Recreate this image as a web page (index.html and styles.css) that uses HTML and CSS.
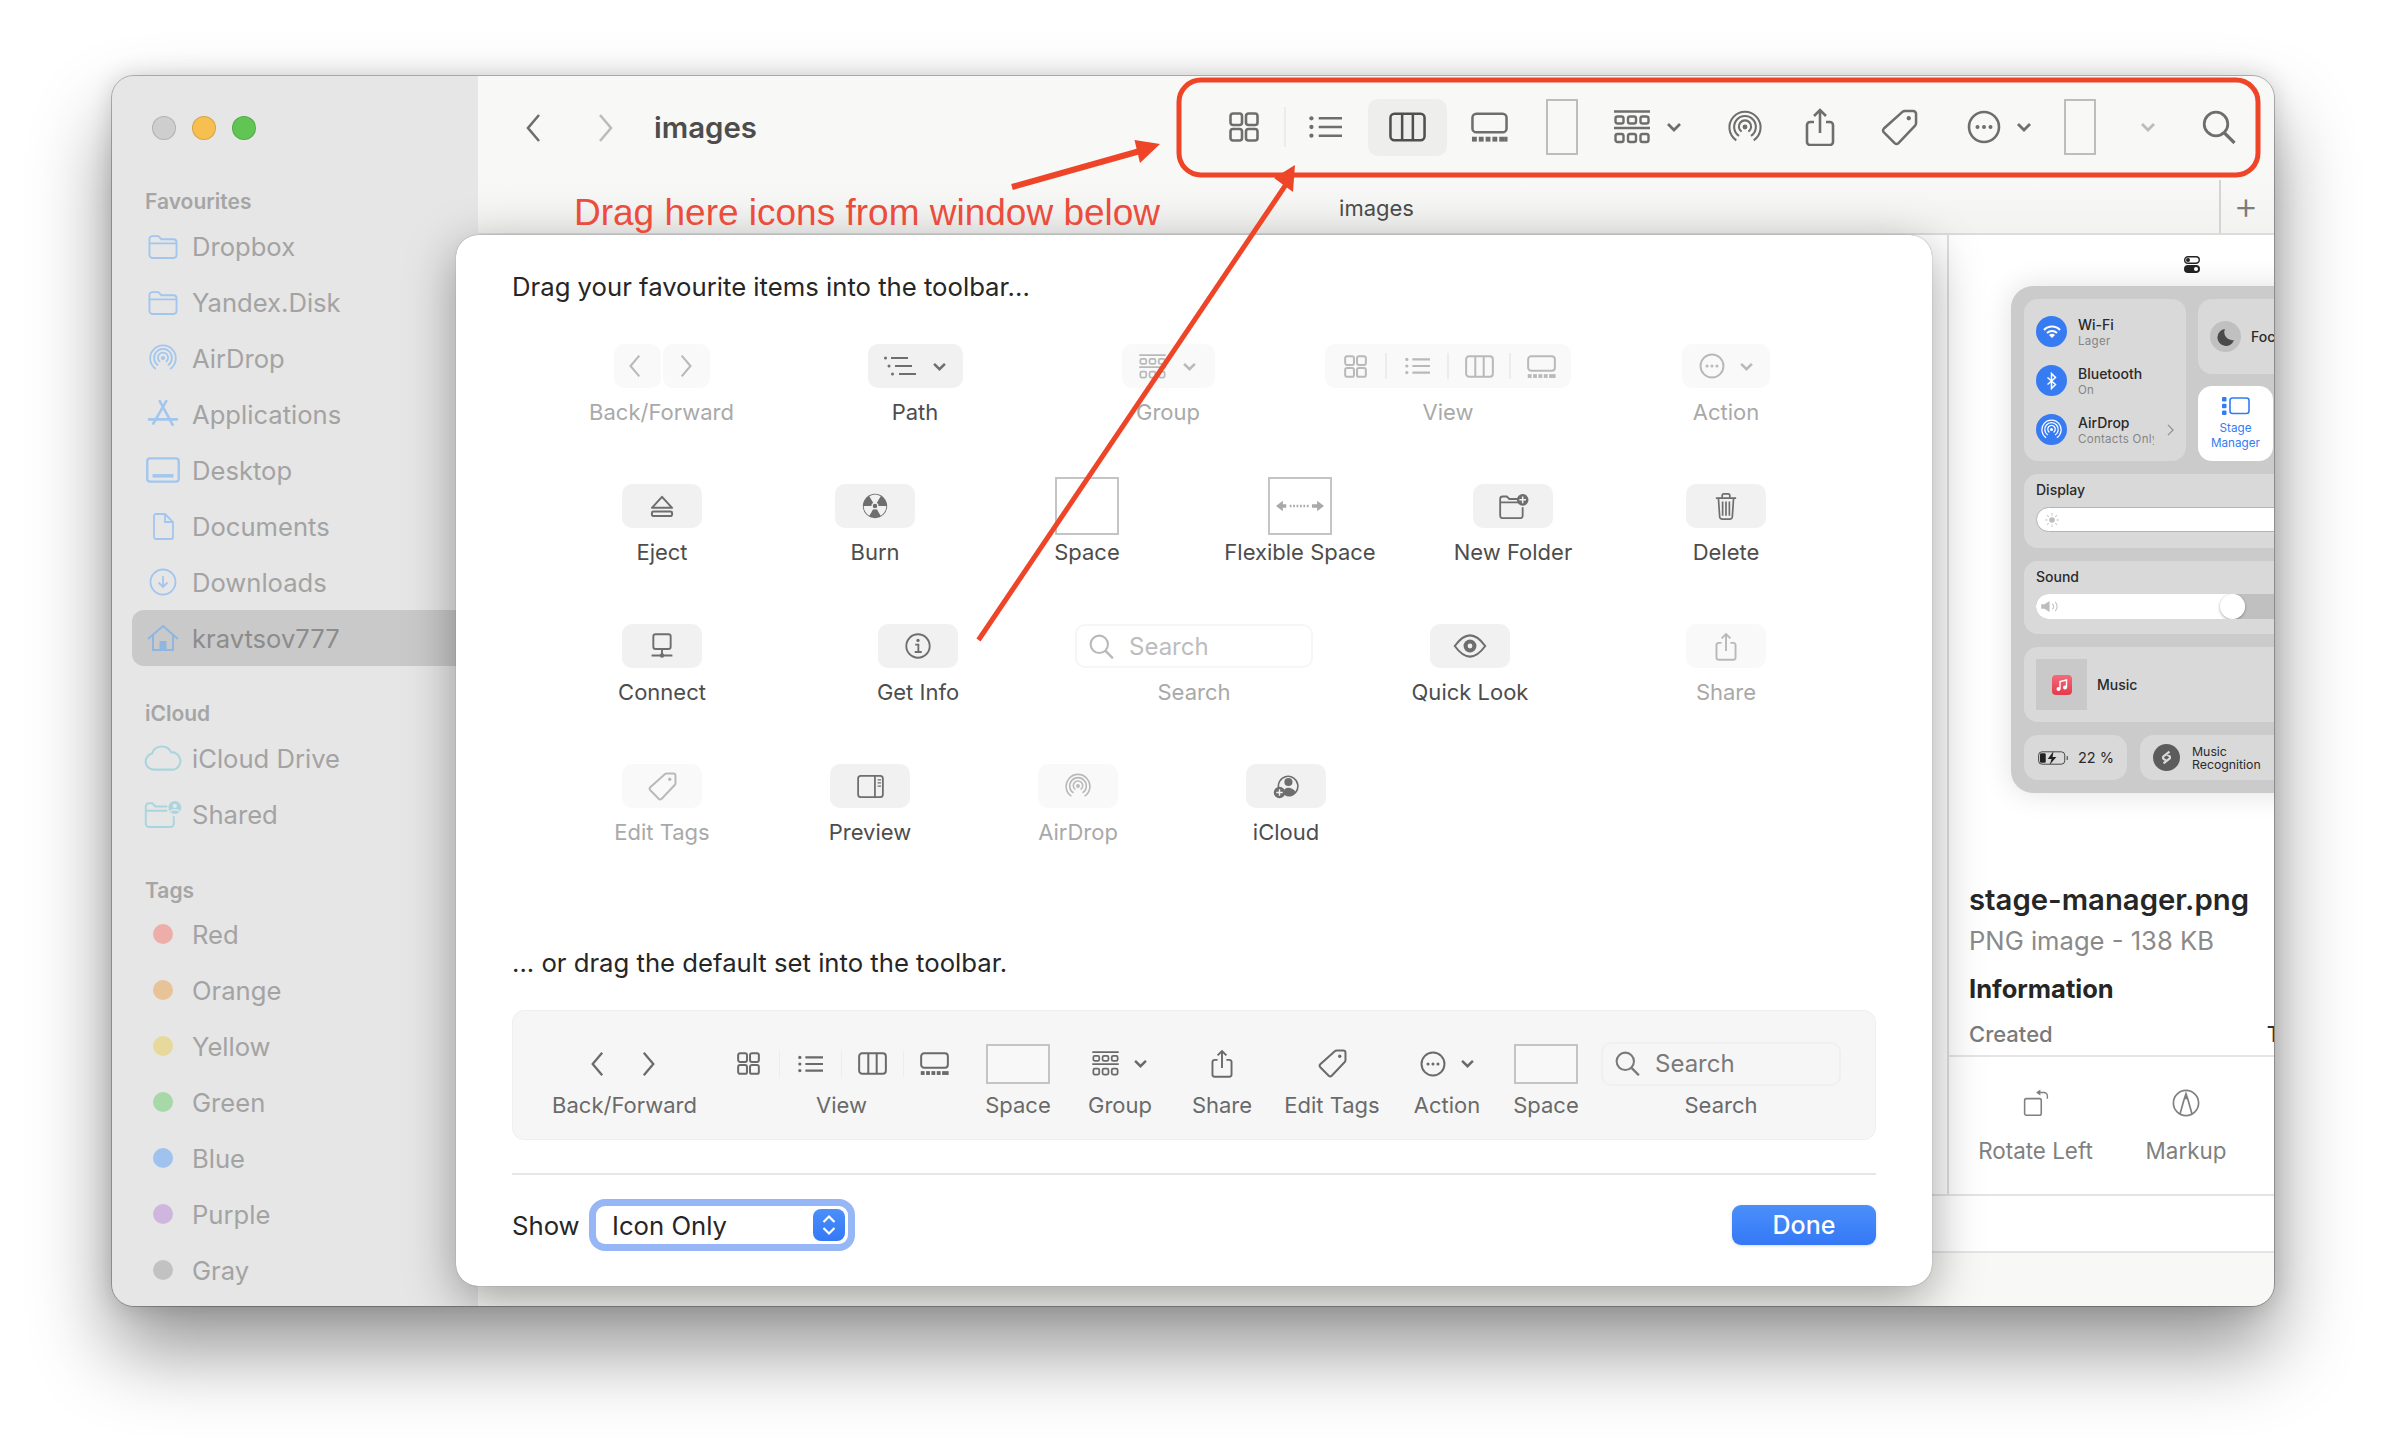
FILE: index.html
```html
<!DOCTYPE html>
<html lang="en">
<head>
    <meta charset="UTF-8">
    <title>images</title>
    <link rel="stylesheet" href="styles.css">
</head>
<body>

    <!-- Icon set, reused with <use> -->
    <svg class="defs" width="0" height="0">
        <symbol id="i-grid" viewBox="0 0 30 30"><g fill="none" stroke="currentColor" stroke-width="2.6"><rect x="1.5" y="1.5" width="11.5" height="11.5" rx="2.5"/><rect x="17" y="1.5" width="11.5" height="11.5" rx="2.5"/><rect x="1.5" y="17" width="11.5" height="11.5" rx="2.5"/><rect x="17" y="17" width="11.5" height="11.5" rx="2.5"/></g></symbol>
        <symbol id="i-list" viewBox="0 0 34 24"><g fill="currentColor"><circle cx="2.5" cy="3" r="2.2"/><circle cx="2.5" cy="12" r="2.2"/><circle cx="2.5" cy="21" r="2.2"/></g><path d="M10 3h24M10 12h24M10 21h24" stroke="currentColor" stroke-width="2.8" fill="none"/></symbol>
        <symbol id="i-path" viewBox="0 0 32 20"><g fill="currentColor"><circle cx="1.5" cy="2" r="1.5"/><circle cx="5" cy="10" r="1.5"/><circle cx="8.500" cy="18" r="1.500"/></g><path d="M7 2h17M11 10h17M15 18h17" stroke="currentColor" stroke-width="2" fill="none"/></symbol>
        <symbol id="i-cols" viewBox="0 0 38 30"><g fill="none" stroke="currentColor" stroke-width="2.6"><rect x="1.5" y="1.5" width="35" height="27" rx="4"/><path d="M13.5 2v26M24.5 2v26"/></g></symbol>
        <symbol id="i-gallery" viewBox="0 0 38 30"><rect x="1.5" y="1.5" width="35" height="19" rx="4" fill="none" stroke="currentColor" stroke-width="2.6"/><g fill="currentColor"><rect x="1" y="25" width="5" height="5"/><rect x="8" y="25" width="5" height="5"/><rect x="15" y="25" width="5" height="5"/><rect x="22" y="25" width="5" height="5"/><rect x="29" y="25" width="5" height="5"/><rect x="34" y="25" width="3.5" height="5"/></g></symbol>
        <symbol id="i-group" viewBox="0 0 36 34"><g fill="none" stroke="currentColor" stroke-width="2.4"><path d="M0 1.5h36M0 18h36"/><rect x="1.5" y="6.5" width="8" height="7" rx="2"/><rect x="14" y="6.5" width="8" height="7" rx="2"/><rect x="26.5" y="6.5" width="8" height="7" rx="2"/><rect x="1.5" y="24" width="8" height="8" rx="2"/><rect x="14" y="24" width="8" height="8" rx="2"/><rect x="26.5" y="24" width="8" height="8" rx="2"/></g></symbol>
        <symbol id="i-chevd" viewBox="0 0 16 10"><path d="M2 2l6 6 6-6" fill="none" stroke="currentColor" stroke-width="2.8"/></symbol>
        <symbol id="i-chevl" viewBox="0 0 16 30"><path d="M14 2L3 15l11 13" fill="none" stroke="currentColor" stroke-width="2.6"/></symbol>
        <symbol id="i-chevr" viewBox="0 0 16 30"><path d="M2 2l11 13L2 28" fill="none" stroke="currentColor" stroke-width="2.6"/></symbol>
        <symbol id="i-airdrop" viewBox="0 0 36 36"><g fill="none" stroke="currentColor" stroke-width="2.2"><path d="M8.8 32.1A16.5 16.5 0 1 1 27.2 32.1"/><path d="M11.7 27.5A11.5 11.5 0 1 1 24.3 27.5"/><path d="M14.4 22.9A6.5 6.5 0 1 1 21.6 22.9"/></g><circle cx="18" cy="18" r="2.6" fill="currentColor"/></symbol>
        <symbol id="i-share" viewBox="0 0 30 38"><path d="M9 14H5a3 3 0 0 0-3 3v17a3 3 0 0 0 3 3h20a3 3 0 0 0 3-3V17a3 3 0 0 0-3-3h-4M15 25V2M9 8l6-6 6 6" fill="none" stroke="currentColor" stroke-width="2.6"/></symbol>
        <symbol id="i-tag" viewBox="0 0 38 38"><path d="M25 2h8a3 3 0 0 1 3 3v9a4 4 0 0 1-1 3L18 35a3 3 0 0 1-4 0L3 24a3 3 0 0 1 0-4L22 3a4 4 0 0 1 3-1z" fill="none" stroke="currentColor" stroke-width="2.6"/><circle cx="28.5" cy="9.5" r="2.2" fill="currentColor"/></symbol>
        <symbol id="i-action" viewBox="0 0 34 34"><circle cx="17" cy="17" r="15" fill="none" stroke="currentColor" stroke-width="2.6"/><g fill="currentColor"><circle cx="10.5" cy="17" r="2"/><circle cx="17" cy="17" r="2"/><circle cx="23.5" cy="17" r="2"/></g></symbol>
        <symbol id="i-search" viewBox="0 0 34 34"><circle cx="14" cy="14" r="11.8" fill="none" stroke="currentColor" stroke-width="2.8"/><path d="M22.5 23l10 10" stroke="currentColor" stroke-width="3.2" fill="none"/></symbol>
        <symbol id="i-eject" viewBox="0 0 26 24"><g fill="none" stroke="currentColor" stroke-width="2.2"><path d="M13 2l11 12H2z" stroke-linejoin="round"/><rect x="2" y="18" width="22" height="5" rx="1.6"/></g></symbol>
        <symbol id="i-burn" viewBox="0 0 32 32"><circle cx="16" cy="16" r="15" fill="currentColor"/><g fill="#f1f1f1"><path d="M16 16L9 4a14 14 0 0 1 14 0z"/><path d="M16 16L9 4a14 14 0 0 1 14 0z" transform="rotate(120 16 16)"/><path d="M16 16L9 4a14 14 0 0 1 14 0z" transform="rotate(240 16 16)"/><circle cx="16" cy="16" r="4.4"/></g><circle cx="16" cy="16" r="2.8" fill="currentColor"/></symbol>
        <symbol id="i-connect" viewBox="0 0 26 30"><g fill="none" stroke="currentColor" stroke-width="2.2"><rect x="3" y="1.5" width="20" height="17" rx="2.6"/><path d="M13 18.5V26M1 26h24"/></g><circle cx="13" cy="26" r="2.6" fill="currentColor"/></symbol>
        <symbol id="i-info" viewBox="0 0 28 28"><circle cx="14" cy="14" r="12.6" fill="none" stroke="currentColor" stroke-width="2"/><circle cx="14" cy="8" r="1.8" fill="currentColor"/><path d="M11 12.5h3.4V20M10.5 20.5h7.5" fill="none" stroke="currentColor" stroke-width="2"/></symbol>
        <symbol id="i-newfolder" viewBox="0 0 36 30"><path d="M24 6H13l-3-3H5a3 3 0 0 0-3 3v20a3 3 0 0 0 3 3h21a3 3 0 0 0 3-3V16M2 10h22" fill="none" stroke="currentColor" stroke-width="2.2"/><circle cx="29" cy="7" r="7" fill="currentColor"/><path d="M29 3v8M25 7h8" stroke="#f1f1f1" stroke-width="1.8"/></symbol>
        <symbol id="i-trash" viewBox="0 0 26 32"><path d="M1 6h24M8.5 5V3a2 2 0 0 1 2-2h5a2 2 0 0 1 2 2v2M4 6l1.5 22a3 3 0 0 0 3 3h9a3 3 0 0 0 3-3L22 6M9 10v17M13 10v17M17 10v17" fill="none" stroke="currentColor" stroke-width="2"/></symbol>
        <symbol id="i-eye" viewBox="0 0 36 26"><path d="M1.5 13C8 4 13 1.5 18 1.5S28 4 34.5 13C28 22 23 24.5 18 24.5S8 22 1.5 13z" fill="none" stroke="currentColor" stroke-width="2.2"/><circle cx="18" cy="13" r="7" fill="currentColor"/><circle cx="18" cy="13" r="2.6" fill="#f1f1f1"/></symbol>
        <symbol id="i-preview" viewBox="0 0 30 26"><g fill="none" stroke="currentColor" stroke-width="2"><rect x="1" y="1" width="28" height="24" rx="3"/><path d="M20 1v24"/><path d="M23 5.5h4M23 9h4M23 12.5h4" stroke-width="1.4"/></g></symbol>
        <symbol id="i-icloud" viewBox="0 0 32 32"><path d="M7 19A12 12 0 1 1 20 28" fill="none" stroke="currentColor" stroke-width="2"/><circle cx="19" cy="11" r="5" fill="currentColor"/><path d="M12 26c0-5 3-8 7-8s8 3 9 6c-2 3-6 5-10 5z" fill="currentColor"/><circle cx="8" cy="24" r="7" fill="currentColor"/><path d="M8 20v8M4 24h8" stroke="#f1f1f1" stroke-width="1.8"/></symbol>
        <symbol id="i-flex" viewBox="0 0 56 14"><path d="M0 7l8-6v4h4v4H8v4zM56 7l-8-6v4h-6v4h6v4z" fill="#a9a9a9"/><path d="M16 7h24" stroke="#a9a9a9" stroke-width="3" stroke-dasharray="2 2"/></symbol>
        <symbol id="i-folder" viewBox="0 0 30 24"><path d="M2 5a3 3 0 0 1 3-3h5.500l3 3H25a3 3 0 0 1 3 3v12a3 3 0 0 1-3 3H5a3 3 0 0 1-3-3zM2 9h26" fill="none" stroke="currentColor" stroke-width="1.800"/></symbol>
        <symbol id="i-apps" viewBox="0 0 30 26"><path d="M12 1l12 22M18 1L6 22M2 18h26" fill="none" stroke="currentColor" stroke-width="2.400" stroke-linecap="round"/></symbol>
        <symbol id="i-desktop" viewBox="0 0 30 24"><rect x="1.500" y="2" width="27" height="20" rx="2.500" fill="none" stroke="currentColor" stroke-width="2"/><path d="M6 17h18" stroke="currentColor" stroke-width="3"/></symbol>
        <symbol id="i-doc" viewBox="0 0 24 28"><path d="M5 2h9l8 8v15a2 2 0 0 1-2 2H5a2 2 0 0 1-2-2V4a2 2 0 0 1 2-2zM14 2v8h8" fill="none" stroke="currentColor" stroke-width="1.800"/></symbol>
        <symbol id="i-down" viewBox="0 0 28 28"><circle cx="14" cy="14" r="12.500" fill="none" stroke="currentColor" stroke-width="1.800"/><path d="M14 8v11M9.500 14.500L14 19l4.500-4.500" fill="none" stroke="currentColor" stroke-width="1.800"/></symbol>
        <symbol id="i-house" viewBox="0 0 32 28"><path d="M1 15L16 2l15 13M6 11v15h20V11" fill="none" stroke="currentColor" stroke-width="2"/><rect x="12.500" y="17" width="7" height="9" fill="currentColor"/></symbol>
        <symbol id="i-cloud" viewBox="0 0 34 24"><path d="M9 22a7 7 0 0 1-1.500-13.800A9 9 0 0 1 24 7a7.600 7.600 0 0 1 2 15z" fill="none" stroke="currentColor" stroke-width="1.800"/></symbol>
        <symbol id="i-sharedfolder" viewBox="0 0 36 26"><path d="M22 6H11L8 3H5a3 3 0 0 0-3 3v16a3 3 0 0 0 3 3h20a3 3 0 0 0 3-3v-7M2 10h20" fill="none" stroke="currentColor" stroke-width="1.800"/><circle cx="29" cy="7" r="6" fill="currentColor"/><circle cx="29" cy="5.500" r="2" fill="#e6e6e6"/><path d="M25 10.500c1-2 7-2 8 0" stroke="#e6e6e6" stroke-width="1.500" fill="none"/></symbol>
        <symbol id="i-rotate" viewBox="0 0 30 32"><rect x="2" y="11" width="19" height="19" rx="2" fill="none" stroke="currentColor" stroke-width="1.800"/><path d="M28 11V8a4 4 0 0 0-4-4h-5" fill="none" stroke="currentColor" stroke-width="1.600"/><path d="M15 4l5-3.500v7z" fill="currentColor"/></symbol>
        <symbol id="i-markup" viewBox="0 0 30 30"><circle cx="15" cy="15" r="13.500" fill="none" stroke="currentColor" stroke-width="1.800"/><path d="M8.500 27L13 11l2-6 2 6 4.500 16" fill="none" stroke="currentColor" stroke-width="1.800"/><path d="M13 11l2-6 2 6z" fill="currentColor"/></symbol>
    </svg>

    <div class="window">

        <!-- Sidebar -->
        <aside class="sidebar">
            <div class="lights">
                <span class="light light-gray"></span>
                <span class="light light-yellow"></span>
                <span class="light light-green"></span>
            </div>

            <h3 class="side-title first">Favourites</h3>
            <div class="side-row"><svg class="side-icon folder"><use href="#i-folder"/></svg>Dropbox</div>
            <div class="side-row"><svg class="side-icon folder"><use href="#i-folder"/></svg>Yandex.Disk</div>
            <div class="side-row"><svg class="side-icon"><use href="#i-airdrop"/></svg>AirDrop</div>
            <div class="side-row"><svg class="side-icon"><use href="#i-apps"/></svg>Applications</div>
            <div class="side-row"><svg class="side-icon"><use href="#i-desktop"/></svg>Desktop</div>
            <div class="side-row"><svg class="side-icon"><use href="#i-doc"/></svg>Documents</div>
            <div class="side-row"><svg class="side-icon"><use href="#i-down"/></svg>Downloads</div>
            <div class="side-row selected"><svg class="side-icon"><use href="#i-house"/></svg>kravtsov777</div>

            <h3 class="side-title">iCloud</h3>
            <div class="side-row teal"><svg class="side-icon"><use href="#i-cloud"/></svg>iCloud Drive</div>
            <div class="side-row teal"><svg class="side-icon"><use href="#i-sharedfolder"/></svg>Shared</div>

            <h3 class="side-title tags-title">Tags</h3>
            <div class="side-row"><span class="dot dot-red"></span>Red</div>
            <div class="side-row"><span class="dot dot-orange"></span>Orange</div>
            <div class="side-row"><span class="dot dot-yellow"></span>Yellow</div>
            <div class="side-row"><span class="dot dot-green"></span>Green</div>
            <div class="side-row"><span class="dot dot-blue"></span>Blue</div>
            <div class="side-row"><span class="dot dot-purple"></span>Purple</div>
            <div class="side-row"><span class="dot dot-gray"></span>Gray</div>
        </aside>

        <!-- Main area -->
        <main class="main">
            <header class="titlebar">
                <div class="nav">
                    <svg class="nav-chev"><use href="#i-chevl"/></svg>
                    <svg class="nav-chev faded"><use href="#i-chevr"/></svg>
                    <span class="folder-name">images</span>
                </div>
                <div class="toolbar">
                    <div class="tb"><svg class="ic-30"><use href="#i-grid"/></svg></div>
                    <div class="tb"><span class="tb-sep"></span></div>
                    <div class="tb"><svg class="ic-list"><use href="#i-list"/></svg></div>
                    <div class="tb"><span class="tb-selected"><svg class="ic-cols"><use href="#i-cols"/></svg></span></div>
                    <div class="tb"><svg class="ic-cols"><use href="#i-gallery"/></svg></div>
                    <div class="tb"><span class="space-tall"></span></div>
                    <div class="tb"><svg class="ic-group"><use href="#i-group"/></svg></div>
                    <div class="tb"><svg class="ic-chev"><use href="#i-chevd"/></svg></div>
                    <div class="tb"><svg class="ic-group"><use href="#i-airdrop"/></svg></div>
                    <div class="tb"><svg class="ic-share"><use href="#i-share"/></svg></div>
                    <div class="tb"><svg class="ic-tag"><use href="#i-tag"/></svg></div>
                    <div class="tb"><svg class="ic-action"><use href="#i-action"/></svg></div>
                    <div class="tb"><svg class="ic-chev"><use href="#i-chevd"/></svg></div>
                    <div class="tb"><span class="space-tall"></span></div>
                    <div class="tb"><svg class="ic-chev faded"><use href="#i-chevd"/></svg></div>
                    <div class="tb"><svg class="ic-action"><use href="#i-search"/></svg></div>
                </div>
            </header>

            <div class="tabbar">
                <div class="tab">images</div>
                <div class="tab-add">+</div>
            </div>

            <div class="content">
                <div class="browser"></div>
                <section class="inspector">
                    <div class="preview">
                        <svg class="cc-glyph" viewBox="0 0 16 17">
                            <rect x="0.700" y="0.700" width="14.600" height="6.600" rx="3.300" fill="#fff" stroke="#222" stroke-width="1.400"/>
                            <circle cx="4" cy="4" r="2" fill="#222"/>
                            <rect y="9" width="16" height="8" rx="4" fill="#222"/>
                            <circle cx="12" cy="13" r="2" fill="#fff"/>
                        </svg>
                        <div class="cc">
                            <div class="cc-top">
                                <div class="cc-card network">
                                    <div class="net-row">
                                        <span class="net-dot">
                                            <svg viewBox="0 0 20 20" width="20" height="20"><path d="M2 8a11 11 0 0 1 16 0M5 11a7 7 0 0 1 10 0" fill="none" stroke="#fff" stroke-width="2"/><path d="M10 16l-3-3a4 4 0 0 1 6 0z" fill="#fff"/></svg>
                                        </span>
                                        <div class="net-text"><div class="net-name">Wi-Fi</div><div class="net-sub">Lager</div></div>
                                    </div>
                                    <div class="net-row">
                                        <span class="net-dot">
                                            <svg viewBox="0 0 20 20" width="20" height="20"><path d="M5.500 6.500l8 7-4 4v-15l4 4-8 7" fill="none" stroke="#fff" stroke-width="1.500"/></svg>
                                        </span>
                                        <div class="net-text"><div class="net-name">Bluetooth</div><div class="net-sub">On</div></div>
                                    </div>
                                    <div class="net-row">
                                        <span class="net-dot">
                                            <svg viewBox="0 0 36 36" width="21" height="21" class="on-blue"><use href="#i-airdrop"/></svg>
                                        </span>
                                        <div class="net-text net-clip"><div class="net-name">AirDrop</div><div class="net-sub">Contacts Only</div></div>
                                        <svg class="net-more" viewBox="0 0 8 14"><path d="M1 1l6 6-6 6" fill="none" stroke="#8f8f8f" stroke-width="1.400"/></svg>
                                    </div>
                                </div>
                                <div class="cc-side">
                                    <div class="cc-card focus">
                                        <span class="moon">
                                            <svg viewBox="0 0 20 20" width="20" height="20"><path d="M9 2a8.500 8.500 0 1 0 9 11A8 8 0 0 1 9 2z" fill="#4a4a4a"/></svg>
                                        </span>
                                        <span class="focus-name">Focus</span>
                                    </div>
                                    <div class="stage">
                                        <svg viewBox="0 0 28 18" width="28" height="18"><g fill="#2f7cf6"><rect width="4.500" height="4.500" y="0" rx="1"/><rect width="4.500" height="4.500" y="6.700" rx="1"/><rect width="4.500" height="4.500" y="13.400" rx="1"/></g><rect x="8" y="1" width="19" height="15.500" rx="2.500" fill="none" stroke="#2f7cf6" stroke-width="1.600"/></svg>
                                        <div class="stage-name">Stage<br>Manager</div>
                                    </div>
                                </div>
                            </div>
                            <div class="cc-card slider-card">
                                <div class="slider-title">Display</div>
                                <div class="slider">
                                    <svg viewBox="0 0 16 16" width="14" height="14"><circle cx="8" cy="8" r="3.200" fill="#bdbdbd"/><path d="M8 0v3M8 13v3M0 8h3M13 8h3M2.300 2.300l2 2M11.700 11.700l2 2M2.300 13.700l2-2M11.700 4.300l2-2" stroke="#c9c9c9" stroke-width="1.200"/></svg>
                                </div>
                            </div>
                            <div class="cc-card slider-card">
                                <div class="slider-title">Sound</div>
                                <div class="slider sound">
                                    <div class="slider-fill">
                                        <svg viewBox="0 0 20 14" width="19" height="13"><path d="M0 4.500h3.500L9 1v12L3.500 9.500H0z" fill="#bdbdbd"/><path d="M12 4a4 4 0 0 1 0 6M15 2a7 7 0 0 1 0 10" fill="none" stroke="#c4c4c4" stroke-width="1.200"/></svg>
                                        <span class="knob"></span>
                                    </div>
                                </div>
                            </div>
                            <div class="cc-card music">
                                <div class="album">
                                    <span class="music-app">
                                        <svg viewBox="0 0 14 14" width="14" height="14"><path d="M5 11V3.500l6.500-1.500v7.500" fill="none" stroke="#fff" stroke-width="1.400"/><circle cx="3.500" cy="11" r="2" fill="#fff"/><circle cx="10" cy="9.500" r="2" fill="#fff"/></svg>
                                    </span>
                                </div>
                                <span class="music-name">Music</span>
                            </div>
                            <div class="cc-bottom">
                                <div class="cc-card battery">
                                    <svg viewBox="0 0 32 14" width="31" height="14"><rect x="0.600" y="0.600" width="27" height="12.800" rx="3.500" fill="none" stroke="#444" stroke-width="1"/><rect x="2" y="2" width="6" height="10" rx="1.500" fill="#222"/><path d="M16 0l-6 8h4l-2 6 7-8h-4z" fill="#222"/><rect x="29.500" y="5" width="1.500" height="4" fill="#666"/></svg>
                                    <span class="battery-text">22 %</span>
                                </div>
                                <div class="cc-card recognition">
                                    <span class="shazam">
                                        <svg viewBox="0 0 16 16" width="19" height="19"><path d="M10.500 3L5.500 7a1.500 1.500 0 0 0 0 2.200l2 1.300M5.500 13l5-4a1.500 1.500 0 0 0 0-2.200l-2-1.300" fill="none" stroke="#d9d9d9" stroke-width="1.800"/></svg>
                                    </span>
                                    <span class="recog-text">Music<br>Recognition</span>
                                </div>
                            </div>
                        </div>
                    </div>

                    <div class="details">
                        <div class="file-name">stage-manager.png</div>
                        <div class="file-kind">PNG image - 138 KB</div>
                        <div class="info-title">Information</div>
                        <div class="info-row"><span>Created</span><span class="info-value">Tuesday</span></div>
                    </div>

                    <div class="actions">
                        <div class="action-item rotate"><svg class="action-icon"><use href="#i-rotate"/></svg>Rotate Left</div>
                        <div class="action-item markup"><svg class="action-icon"><use href="#i-markup"/></svg>Markup</div>
                    </div>
                </section>
            </div>

            <div class="strip"></div>
            <div class="footer"></div>
        </main>

        <!-- Customize toolbar sheet -->
        <section class="sheet">
            <p class="sheet-text">Drag your favourite items into the toolbar...</p>

            <div class="palette row-a">
                <div class="item off">
                    <div class="slot"><div class="btn-pair"><span class="btn half"><svg class="nav-small"><use href="#i-chevl"/></svg></span><span class="btn half"><svg class="nav-small"><use href="#i-chevr"/></svg></span></div></div>
                    <span class="label">Back/Forward</span>
                </div>
                <div class="item">
                    <div class="slot"><span class="btn path"><svg class="ic-path"><use href="#i-path"/></svg><svg class="ic-chev-s"><use href="#i-chevd"/></svg></span></div>
                    <span class="label">Path</span>
                </div>
                <div class="item off">
                    <div class="slot"><span class="btn path group-btn"><svg class="ic-group-s"><use href="#i-group"/></svg><svg class="ic-chev-s"><use href="#i-chevd"/></svg></span></div>
                    <span class="label">Group</span>
                </div>
                <div class="item off">
                    <div class="slot"><span class="btn view-btn">
                        <span class="cell"><svg class="ic-23"><use href="#i-grid"/></svg></span><span class="cell"><span class="cell-sep"></span></span><span class="cell"><svg class="ic-list-s"><use href="#i-list"/></svg></span><span class="cell"><span class="cell-sep"></span></span><span class="cell"><svg class="ic-cols-s"><use href="#i-cols"/></svg></span><span class="cell"><span class="cell-sep"></span></span><span class="cell"><svg class="ic-cols-s"><use href="#i-gallery"/></svg></span>
                    </span></div>
                    <span class="label">View</span>
                </div>
                <div class="item off">
                    <div class="slot"><span class="btn action-btn"><svg class="ic-26"><use href="#i-action"/></svg><svg class="ic-chev-s"><use href="#i-chevd"/></svg></span></div>
                    <span class="label">Action</span>
                </div>
            </div>

            <div class="palette row-b">
                <div class="item"><div class="slot"><span class="btn"><svg class="ic-eject"><use href="#i-eject"/></svg></span></div><span class="label">Eject</span></div>
                <div class="item"><div class="slot"><span class="btn"><svg class="ic-26"><use href="#i-burn"/></svg></span></div><span class="label">Burn</span></div>
                <div class="item"><div class="slot"><span class="space-box"></span></div><span class="label">Space</span></div>
                <div class="item"><div class="slot"><span class="space-box"><svg class="ic-flex"><use href="#i-flex"/></svg></span></div><span class="label">Flexible Space</span></div>
                <div class="item"><div class="slot"><span class="btn"><svg class="ic-folder"><use href="#i-newfolder"/></svg></span></div><span class="label">New Folder</span></div>
                <div class="item"><div class="slot"><span class="btn"><svg class="ic-trash"><use href="#i-trash"/></svg></span></div><span class="label">Delete</span></div>
            </div>

            <div class="palette row-c">
                <div class="item"><div class="slot"><span class="btn"><svg class="ic-26"><use href="#i-connect"/></svg></span></div><span class="label">Connect</span></div>
                <div class="item"><div class="slot"><span class="btn"><svg class="ic-26"><use href="#i-info"/></svg></span></div><span class="label">Get Info</span></div>
                <div class="item off"><div class="slot"><span class="search-box wide"><svg class="ic-search-s"><use href="#i-search"/></svg><span class="search-text">Search</span></span></div><span class="label">Search</span></div>
                <div class="item"><div class="slot"><span class="btn"><svg class="ic-eye"><use href="#i-eye"/></svg></span></div><span class="label">Quick Look</span></div>
                <div class="item off"><div class="slot"><span class="btn"><svg class="ic-share-s"><use href="#i-share"/></svg></span></div><span class="label">Share</span></div>
            </div>

            <div class="palette row-d">
                <div class="item off"><div class="slot"><span class="btn"><svg class="ic-tag-s"><use href="#i-tag"/></svg></span></div><span class="label">Edit Tags</span></div>
                <div class="item"><div class="slot"><span class="btn"><svg class="ic-preview"><use href="#i-preview"/></svg></span></div><span class="label">Preview</span></div>
                <div class="item off"><div class="slot"><span class="btn"><svg class="ic-26"><use href="#i-airdrop"/></svg></span></div><span class="label">AirDrop</span></div>
                <div class="item"><div class="slot"><span class="btn"><svg class="ic-26"><use href="#i-icloud"/></svg></span></div><span class="label">iCloud</span></div>
            </div>

            <p class="sheet-text or-text">... or drag the default set into the toolbar.</p>

            <div class="defaults">
                <div class="d-item"><div class="d-slot"><svg class="d-chev"><use href="#i-chevl"/></svg><svg class="d-chev gap-36"><use href="#i-chevr"/></svg></div><span class="label">Back/Forward</span></div>
                <div class="d-item"><div class="d-slot">
                    <span class="cell"><svg class="ic-23"><use href="#i-grid"/></svg></span><span class="cell"><span class="cell-sep"></span></span><span class="cell"><svg class="ic-list-s"><use href="#i-list"/></svg></span><span class="cell"><span class="cell-sep"></span></span><span class="cell"><svg class="ic-cols-s"><use href="#i-cols"/></svg></span><span class="cell"><span class="cell-sep"></span></span><span class="cell"><svg class="ic-cols-s"><use href="#i-gallery"/></svg></span>
                </div><span class="label">View</span></div>
                <div class="d-item"><div class="d-slot"><span class="d-space"></span></div><span class="label">Space</span></div>
                <div class="d-item"><div class="d-slot d-wide"><svg class="ic-group-s"><use href="#i-group"/></svg><svg class="ic-chev-s"><use href="#i-chevd"/></svg></div><span class="label">Group</span></div>
                <div class="d-item"><div class="d-slot"><svg class="ic-share-s"><use href="#i-share"/></svg></div><span class="label">Share</span></div>
                <div class="d-item"><div class="d-slot"><svg class="ic-tag-s"><use href="#i-tag"/></svg></div><span class="label">Edit Tags</span></div>
                <div class="d-item"><div class="d-slot d-wide"><svg class="ic-26"><use href="#i-action"/></svg><svg class="ic-chev-s"><use href="#i-chevd"/></svg></div><span class="label">Action</span></div>
                <div class="d-item"><div class="d-slot"><span class="d-space"></span></div><span class="label">Space</span></div>
                <div class="d-item"><div class="d-slot"><span class="search-box dark"><svg class="ic-search-s"><use href="#i-search"/></svg><span class="search-text">Search</span></span></div><span class="label">Search</span></div>
            </div>

            <div class="sheet-line"></div>

            <div class="sheet-footer">
                <span class="show-label">Show</span>
                <div class="select">
                    <span>Icon Only</span>
                    <span class="stepper">
                        <svg viewBox="0 0 16 24" width="16" height="24"><path d="M2.500 9L8 3.500 13.500 9M2.500 15L8 20.500 13.500 15" fill="none" stroke="#fff" stroke-width="2.200"/></svg>
                    </span>
                </div>
                <button class="done">Done</button>
            </div>
        </section>
    </div>

    <!-- Red annotations over the screenshot -->
    <svg class="marks" width="2386" height="1454" viewBox="0 0 2386 1454">
        <rect x="1179" y="80" width="1079" height="95" rx="22" fill="none" stroke="#ee4528" stroke-width="5"/>
        <path d="M1012 187L1140 151" stroke="#ee4528" stroke-width="6" fill="none"/>
        <path d="M1160 144L1134.500 140 1140 163z" fill="#ee4528"/>
        <path d="M978.500 640L1287 183" stroke="#ee4528" stroke-width="5" fill="none"/>
        <path d="M1295 165L1274 178 1293 192z" fill="#ee4528"/>
    </svg>
    <div class="note">Drag here icons from window below</div>

</body>
</html>
```

FILE: styles.css
```css
* {
    box-sizing: border-box;
}

html, body {
    margin: 0;
    padding: 0;
    width: 2386px;
    height: 1454px;
    overflow: hidden;
    background-color: #fff;
    font-family: Inter, "Noto Sans", sans-serif;
    position: relative;
}

.defs {
    position: absolute;
}

svg {
    display: block;
}

/* window */
.window {
    position: absolute;
    left: 112px;
    top: 76px;
    width: 2162px;
    height: 1230px;
    display: flex;
    border-radius: 22px;
    overflow: hidden;
    outline: 1px solid rgba(0, 0, 0, 0.25);
}

body::before {
    content: "";
    position: absolute;
    left: 112px;
    top: 76px;
    width: 2162px;
    height: 1230px;
    border-radius: 22px;
    box-shadow: 0 44px 80px rgba(0, 0, 0, 0.42), 0 0 24px rgba(0, 0, 0, 0.16);
}

/* sidebar */
.sidebar {
    width: 366px;
    flex: none;
    background-color: #e6e6e6;
    padding-top: 40px;
    color: #a3a3a3;
    font-size: 25.600px;
}

.lights {
    display: flex;
    gap: 16px;
    padding-left: 40px;
}

.light {
    width: 24px;
    height: 24px;
    border-radius: 50%;
    border: 1px solid rgba(0, 0, 0, 0.14);
}

.light-gray { background-color: #cecece; }
.light-yellow { background-color: #f6bf4f; }
.light-green { background-color: #61c554; }

.side-title {
    margin: 34px 0 2px 33px;
    height: 28px;
    line-height: 28px;
    font-size: 21px;
    font-weight: 600;
    color: #a5a5a5;
}

.side-title.first {
    margin-top: 48px;
    margin-bottom: 2px;
}

.side-title.tags-title {
    margin-top: 35px;
    margin-bottom: 1px;
}

.side-row {
    height: 56px;
    margin: 0 0 0 20px;
    padding-left: 9px;
    display: flex;
    align-items: center;
    gap: 7px;
    color: #a3a3a3;
    white-space: nowrap;
}

.side-row.selected {
    background-color: #c9c9c9;
    color: #8c8c8c;
    border-radius: 12px;
}

.side-icon {
    width: 44px;
    height: 28px;
    color: #a2c6ee;
}

.side-icon.folder {
    height: 25px;
}

.teal .side-icon {
    color: #a9d5de;
}

.selected .side-icon {
    color: #8fb6e0;
}

.dot {
    width: 20px;
    height: 20px;
    border-radius: 50%;
    margin: 0 12px;
}

.dot-red { background-color: #edaeaa; }
.dot-orange { background-color: #e9c398; }
.dot-yellow { background-color: #e7d89b; }
.dot-green { background-color: #a7d8a8; }
.dot-blue { background-color: #9fc3ee; }
.dot-purple { background-color: #cfb6df; }
.dot-gray { background-color: #c2c2c2; }

/* main */
.main {
    flex: 1;
    min-width: 0;
    display: flex;
    flex-direction: column;
    background-color: #fff;
    color: #6e6e6e;
}

.titlebar {
    height: 104px;
    flex: none;
    display: flex;
    align-items: center;
    justify-content: space-between;
    background-color: #f8f8f6;
    padding: 0 2px 0 47px;
}

.nav {
    display: flex;
    align-items: center;
}

.nav-chev {
    width: 16px;
    height: 30px;
    margin-right: 57px;
}

.nav-chev.faded {
    margin-right: 40px;
}

.faded {
    color: #bcbcbc;
}

.folder-name {
    font-size: 29.400px;
    font-weight: 600;
    color: #4d4d4d;
    margin-top: -1px;
}

.toolbar {
    display: grid;
    grid-template-columns: 44px 38px 42px 122px 42px 104px 36px 48px 94px 56px 102px 68px 12px 100px 36px 106px;
    height: 60px;
    align-items: center;
    justify-items: center;
    margin-top: -2px;
}

.tb {
    display: flex;
    align-items: center;
    justify-content: center;
    width: 100%;
    overflow: visible;
}

.tb-sep {
    width: 2px;
    height: 40px;
    background-color: #ececec;
}

.tb-selected {
    width: 79px;
    height: 57px;
    background-color: #eeeeec;
    border-radius: 10px;
    display: flex;
    align-items: center;
    justify-content: center;
    color: #4f4f4f;
}

.space-tall {
    width: 32px;
    height: 56px;
    border: 2px solid #bdbdbd;
    background-color: #f8f8f6;
    flex: none;
}

.ic-30 { width: 30px; height: 30px; }
.ic-list { width: 33px; height: 24px; }
.ic-cols { width: 37px; height: 30px; }
.ic-group { width: 36px; height: 34px; }
.ic-chev { width: 16px; height: 10px; flex: none; }
.ic-share { width: 30px; height: 38px; }
.ic-tag { width: 37px; height: 37px; }
.ic-action { width: 34px; height: 34px; flex: none; }

.tabbar {
    height: 55px;
    flex: none;
    display: flex;
    background: linear-gradient(#f8f8f6, #f2f2f1);
    border-bottom: 2px solid #dcdcdc;
}

.tab {
    flex: 1;
    text-align: center;
    font-size: 22px;
    line-height: 56px;
    color: #4d4d4d;
    padding-left: 56px;
}

.tab-add {
    width: 55px;
    border-left: 2px solid #d4d4d4;
    text-align: center;
    font-size: 38px;
    font-weight: 300;
    line-height: 50px;
    color: #7c7c7c;
    padding-right: 3px;
}

.content {
    flex: none;
    height: 959px;
    display: flex;
}

.browser {
    flex: 1;
    background-color: #fff;
}

/* inspector */
.inspector {
    width: 327px;
    flex: none;
    border-left: 2px solid #dfdfdf;
    overflow: hidden;
    display: flex;
    flex-direction: column;
    background-color: #fff;
}

.preview {
    flex: none;
    height: 648px;
}

.cc-glyph {
    width: 16px;
    height: 17px;
    margin: 21px 0 0 235px;
}

.cc {
    margin: 13px 0 0 62px;
    width: 340px;
    height: 507px;
    padding: 13px;
    border-radius: 22px;
    background-color: #cbcbcb;
    display: flex;
    flex-direction: column;
    gap: 13px;
    box-shadow: 0 0 30px rgba(0, 0, 0, 0.12);
    color: #2a2a2a;
}

.cc-top {
    display: flex;
    gap: 12px;
}

.cc-card {
    background-color: #d9d9d9;
    border-radius: 14px;
}

.network {
    width: 162px;
    height: 162px;
    flex: none;
    padding: 17px 12px 0;
    display: flex;
    flex-direction: column;
    gap: 18px;
}

.net-row {
    height: 31px;
    display: flex;
    align-items: center;
    gap: 11px;
    position: relative;
}

.net-dot {
    width: 31px;
    height: 31px;
    flex: none;
    border-radius: 50%;
    background-color: #377bf3;
    display: flex;
    align-items: center;
    justify-content: center;
}

.on-blue {
    color: #fff;
}

.net-text {
    padding-top: 2px;
}

.net-name {
    font-size: 14px;
    font-weight: 500;
    line-height: 17px;
}

.net-sub {
    font-size: 11.500px;
    letter-spacing: 0.3px;
    line-height: 17px;
    color: #858585;
    white-space: nowrap;
}

.net-clip {
    width: 76px;
    overflow: hidden;
}

.net-more {
    width: 7px;
    height: 12px;
    margin-left: 2px;
}

.cc-side {
    display: flex;
    flex-direction: column;
    gap: 12px;
}

.focus {
    width: 140px;
    height: 75px;
    display: flex;
    align-items: center;
    padding-left: 12px;
    gap: 10px;
}

.moon {
    width: 31px;
    height: 31px;
    border-radius: 50%;
    background-color: #c0c0c0;
    display: flex;
    align-items: center;
    justify-content: center;
}

.focus-name {
    font-size: 14px;
    font-weight: 500;
}

.stage {
    width: 75px;
    height: 75px;
    background-color: #fff;
    border-radius: 14px;
    display: flex;
    flex-direction: column;
    align-items: center;
    padding-top: 11px;
}

.stage-name {
    margin-top: 6px;
    text-align: center;
    font-size: 11.700px;
    line-height: 15px;
    color: #2f7cf6;
}

.slider-card {
    height: 75px;
    width: 300px;
    padding: 7px 12px;
}

.slider-title {
    font-size: 14px;
    line-height: 18px;
    font-weight: 500;
    margin-bottom: 8px;
}

.slider {
    height: 25px;
    border-radius: 13px;
    background-color: #fff;
    border: 1px solid #b4b4b4;
    padding-left: 8px;
    display: flex;
    align-items: center;
}

.slider.sound {
    background-color: #c0c0c0;
    border: none;
    padding: 0;
    overflow: hidden;
}

.slider-fill {
    width: 209px;
    height: 25px;
    background-color: #fff;
    border-radius: 13px;
    padding-left: 5px;
    display: flex;
    align-items: center;
    justify-content: space-between;
}

.knob {
    width: 25px;
    height: 25px;
    border-radius: 50%;
    background-color: #fff;
    box-shadow: 0 1px 3px rgba(0, 0, 0, 0.35);
}

.music {
    width: 300px;
    height: 75px;
    padding: 12px;
    display: flex;
    align-items: center;
    gap: 10px;
}

.album {
    width: 51px;
    height: 51px;
    background-color: #c9c9c9;
    display: flex;
    align-items: center;
    justify-content: center;
}

.music-app {
    width: 20px;
    height: 20px;
    border-radius: 4px;
    background: linear-gradient(#f56a7a, #e23b4d);
    display: flex;
    align-items: center;
    justify-content: center;
}

.music-name {
    font-size: 14px;
    font-weight: 500;
}

.cc-bottom {
    display: flex;
    gap: 13px;
}

.battery {
    width: 103px;
    height: 45px;
    flex: none;
    display: flex;
    align-items: center;
    gap: 9px;
    padding-left: 14px;
}

.battery-text {
    font-size: 14.500px;
}

.recognition {
    width: 160px;
    height: 45px;
    display: flex;
    align-items: center;
    gap: 12px;
    padding-left: 13px;
}

.shazam {
    width: 27px;
    height: 27px;
    flex: none;
    border-radius: 50%;
    background-color: #5c5c5c;
    display: flex;
    align-items: center;
    justify-content: center;
}

.recog-text {
    font-size: 12.300px;
    line-height: 13px;
}

.details {
    flex: 1;
    padding: 0 0 0 20px;
    white-space: nowrap;
}

.file-name {
    height: 34px;
    line-height: 34px;
    font-size: 29.300px;
    font-weight: 600;
    color: #262626;
}

.file-kind {
    margin-top: 8px;
    height: 32px;
    line-height: 32px;
    font-size: 25.600px;
    color: #8a8a8a;
}

.info-title {
    margin-top: 17px;
    height: 30px;
    line-height: 30px;
    font-size: 25.500px;
    font-weight: 700;
    color: #262626;
}

.info-row {
    margin-top: 16px;
    height: 28px;
    line-height: 28px;
    font-size: 22px;
    font-weight: 500;
    color: #7a7a7a;
    display: flex;
}

.info-value {
    margin-left: 214px;
    color: #333;
}

.actions {
    flex: none;
    height: 139px;
    border-top: 2px solid #e4e4e4;
    display: flex;
    padding-top: 32px;
}

.action-item {
    display: flex;
    flex-direction: column;
    align-items: center;
    gap: 20px;
    font-size: 22.400px;
    line-height: 28px;
    color: #808080;
    white-space: nowrap;
}

.action-item.rotate { width: 173px; }
.action-item.markup { width: 128px; }

.action-icon {
    width: 28px;
    height: 28px;
}

.strip {
    flex: none;
    height: 57px;
    background-color: #fff;
    border-top: 2px solid #e4e4e4;
}

.footer {
    flex: 1;
    background-color: #f8f8f6;
    border-top: 2px solid #e4e4e4;
}

/* sheet */
.sheet {
    position: absolute;
    left: 344px;
    top: 159px;
    width: 1476px;
    height: 1051px;
    padding: 35px 56px 0 56px;
    background-color: #fff;
    border-radius: 22px;
    box-shadow: 0 14px 50px rgba(0, 0, 0, 0.36), 0 0 1px rgba(0, 0, 0, 0.5);
    color: #4d4d4d;
}

.sheet-text {
    margin: 0;
    height: 34px;
    line-height: 34px;
    font-size: 25.700px;
    color: #262626;
}

.or-text {
    margin-top: 49px;
}

.palette {
    display: grid;
    height: 140px;
    align-items: start;
    margin-left: 1px;
}

.row-a {
    margin-top: 33px;
    grid-template-columns: 297px 210px 296px 264px 292px;
}

.row-b { grid-template-columns: 298px 128px 296px 130px 296px 130px; }
.row-c { grid-template-columns: 298px 214px 338px 214px 298px; }
.row-d { grid-template-columns: 298px 118px 298px 118px; }

.item, .d-item {
    display: flex;
    flex-direction: column;
    align-items: center;
}

.off {
    color: #a9a9a9;
}

.off .btn {
    background-color: #f9f9f9;
}

.slot {
    height: 58px;
    display: flex;
    align-items: center;
    justify-content: center;
    margin-bottom: 2px;
}

.label {
    height: 30px;
    line-height: 30px;
    font-size: 22px;
    white-space: nowrap;
}

.btn {
    width: 80px;
    height: 44px;
    background-color: #f1f1f1;
    border-radius: 10px;
    color: #6e6e6e;
    display: flex;
    align-items: center;
    justify-content: center;
    flex: none;
}

.off .btn,
.off .search-box {
    color: #b9b9b9;
}

.btn-pair {
    display: flex;
    gap: 2px;
}

.btn.half {
    width: 47px;
}

.btn.half:first-child {
    padding-right: 5px;
}

.nav-small {
    width: 13px;
    height: 24px;
}

.btn.path {
    width: 95px;
    gap: 16px;
}

.btn.group-btn {
    width: 93px;
    gap: 16px;
}

.btn.view-btn {
    width: 246px;
}

.btn.action-btn {
    width: 88px;
    gap: 14px;
}

.cell {
    width: 31px;
    height: 30px;
    display: flex;
    align-items: center;
    justify-content: center;
    flex: none;
}

.cell-sep {
    width: 1.500px;
    height: 26px;
    background-color: #ececec;
}

.ic-23 { width: 23px; height: 23px; }
.ic-26 { width: 26px; height: 26px; flex: none; }
.ic-list-s { width: 25px; height: 18px; flex: none; }
.ic-path { width: 32px; height: 20px; flex: none; }
.ic-cols-s { width: 29px; height: 23px; flex: none; }
.ic-group-s { width: 27px; height: 25px; flex: none; }
.ic-chev-s { width: 15px; height: 9px; flex: none; }
.ic-eject { width: 24px; height: 22px; }
.ic-folder { width: 33px; height: 25px; }
.ic-trash { width: 22px; height: 27px; }
.ic-eye { width: 34px; height: 24px; }
.ic-preview { width: 29px; height: 23px; }
.ic-share-s { width: 22px; height: 29px; }
.ic-tag-s { width: 29px; height: 29px; }
.ic-search-s { width: 25px; height: 25px; flex: none; }

.ic-flex {
    width: 54px;
    height: 12px;
}

.space-box {
    width: 64px;
    height: 58px;
    border: 2px solid #c4c4c4;
    background-color: #fff;
    display: flex;
    align-items: center;
    justify-content: center;
    flex: none;
}

.search-box {
    width: 240px;
    height: 44px;
    border: 2px solid #f0f0f0;
    border-radius: 10px;
    display: flex;
    align-items: center;
    gap: 15px;
    padding-left: 12px;
    color: #7a7a7a;
    flex: none;
}

.search-box.wide {
    width: 238px;
    border-color: #f6f6f6;
}

.search-text {
    font-size: 24px;
}

.off .search-text {
    color: #bdbdbd;
}

.defaults {
    margin-top: 30px;
    height: 130px;
    padding-top: 31px;
    background-color: #f6f6f6;
    border: 1px solid #efefef;
    border-radius: 12px;
    display: grid;
    grid-template-columns: 223px 211px 142px 62px 142px 78px 152px 46px 304px;
    width: 1364px;
    align-items: start;
    color: #6a6a6a;
}

.d-slot {
    height: 43px;
    display: flex;
    align-items: center;
    justify-content: center;
    margin-bottom: 5px;
    flex: none;
}

.d-wide {
    gap: 14px;
}

.d-chev {
    width: 14px;
    height: 26px;
}

.gap-36 {
    margin-left: 38px;
    margin-right: 3px;
}

.d-space {
    width: 64px;
    height: 40px;
    border: 2px solid #c4c4c4;
    background-color: #f8f8f8;
    flex: none;
}

.sheet-line {
    margin-top: 33px;
    width: 1364px;
    height: 2px;
    background-color: #e6e6e6;
}

.sheet-footer {
    margin-top: 24px;
    height: 52px;
    display: flex;
    align-items: center;
    color: #262626;
}

.show-label {
    font-size: 25.700px;
    width: 84px;
}

.select {
    width: 252px;
    height: 38px;
    background-color: #fff;
    border-radius: 9px;
    box-shadow: 0 0 0 7px #97b6f5, 0 1px 3px rgba(0, 0, 0, 0.3);
    display: flex;
    align-items: center;
    justify-content: space-between;
    padding: 0 3px 0 16px;
    font-size: 25.700px;
}

.stepper {
    width: 32px;
    height: 32px;
    background: linear-gradient(#4b8ffb, #3478f6);
    border-radius: 8px;
    display: flex;
    align-items: center;
    justify-content: center;
}

.done {
    margin-left: auto;
    width: 144px;
    height: 40px;
    border: none;
    border-radius: 9px;
    background: linear-gradient(#4b8ffb, #3478f6);
    box-shadow: 0 1px 3px rgba(0, 0, 0, 0.15);
    color: #fff;
    font-family: inherit;
    font-size: 25px;
    font-weight: 500;
}

/* annotations */
.marks {
    position: absolute;
    left: 0;
    top: 0;
    pointer-events: none;
}

.note {
    position: absolute;
    left: 574px;
    top: 191px;
    height: 44px;
    line-height: 44px;
    font-family: "Liberation Sans", Arial, sans-serif;
    font-size: 37px;
    color: #ec4c3c;
    white-space: nowrap;
}
```
